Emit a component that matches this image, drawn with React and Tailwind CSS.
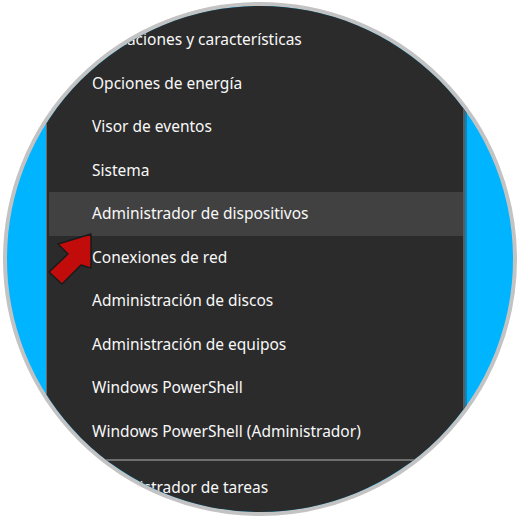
import React from "react";

const items = [
  "Aplicaciones y características",
  "Opciones de energía",
  "Visor de eventos",
  "Sistema",
  "Administrador de dispositivos",
  "Conexiones de red",
  "Administración de discos",
  "Administración de equipos",
  "Windows PowerShell",
  "Windows PowerShell (Administrador)",
];

export default function App() {
  return (
    <div className="relative w-[520px] h-[520px] bg-white pt-[2px] pl-[3px]" style={{ fontFamily: '"Noto Sans", "Open Sans", sans-serif' }}>
      <div className="w-[514px] h-[514px] rounded-full border-4 border-[#c3c3c3] overflow-hidden bg-[#00b4ff]">
        <div className="ml-[39px] w-[421px] h-full bg-[#2b2b2b] border-l border-[#6a6a6a] flex">
          <div className="flex-1 pt-[12px] pl-[2px]">
            {items.map((t, i) => (
              <div
                key={t}
                className={
                  "h-[43.5px] flex items-center pl-[43px] text-[15.5px] text-[#f8f8f8] whitespace-nowrap " +
                  (i === 4 ? "bg-[#414141]" : "")
                }
              >
                {t}
              </div>
            ))}
            <div className="h-[13px] flex items-center">
              <div className="w-full h-[2px] bg-[#6e6e6e]" />
            </div>
            <div className="h-[43.5px] flex items-center pl-[43px] text-[15.5px] text-[#f8f8f8] whitespace-nowrap">
              Administrador de tareas
            </div>
          </div>
          <div className="w-[2px] h-full bg-[#5c5c5c]" />
          <div className="w-[2px] h-full bg-[#0a86c0]" />
        </div>
      </div>
      <svg className="absolute left-0 top-0 pointer-events-none" width="520" height="520" viewBox="0 0 520 520">
        <polygon
          points="91,234 58,244 68,254 49,272 62,284 81,265 91,268"
          fill="#c20c0c"
          stroke="#1a1a1a"
          strokeWidth="1.5"
          strokeLinejoin="round"
        />
      </svg>
    </div>
  );
}
